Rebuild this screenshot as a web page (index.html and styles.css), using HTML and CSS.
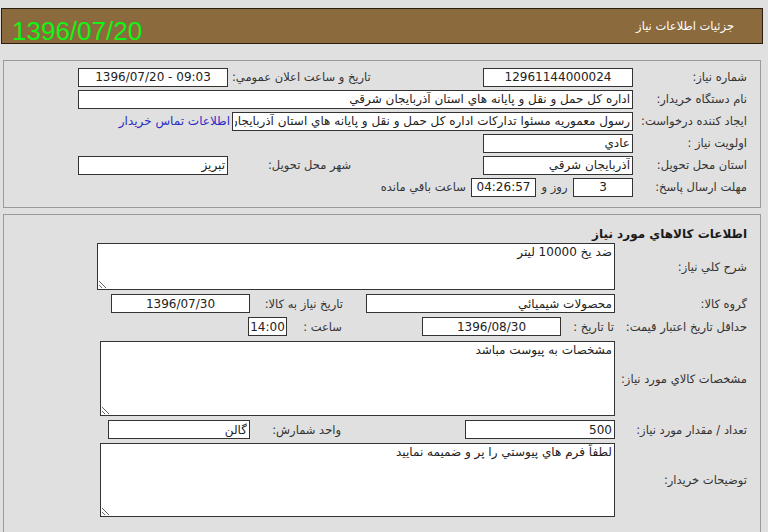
FILE: index.html
```html
<!DOCTYPE html>
<html lang="fa" dir="rtl">
<head>
<meta charset="utf-8">
<title>جزئيات اطلاعات نياز</title>
<link rel="stylesheet" href="styles.css">
</head>
<body>
<div class="page">
  <header class="topbar">
    <span class="title">جزئيات اطلاعات نياز</span>
    <span class="date">1396/07/20</span>
  </header>

  <section class="panel p1">
    <div class="row">
      <span class="lbl">شماره نياز:</span>
      <input class="fld w150 c" value="12961144000024" readonly>
      <span class="lbl2 pl4">تاريخ و ساعت اعلان عمومي:</span>
      <input class="fld w150 c" value="1396/07/20 - 09:03" readonly>
    </div>
    <div class="row">
      <span class="lbl">نام دستگاه خريدار:</span>
      <input class="fld w555" value="اداره كل حمل و نقل و پايانه هاي استان آذربايجان شرقي" readonly>
    </div>
    <div class="row">
      <span class="lbl">ايجاد كننده درخواست:</span>
      <input class="fld w401" value="رسول معموريه مسئوا تداركات اداره كل حمل و نقل و پايانه هاي استان آذربايجان" readonly>
      <a class="link" href="#">اطلاعات تماس خريدار</a>
    </div>
    <div class="row">
      <span class="lbl">اولويت نياز :</span>
      <input class="fld w150" value="عادي" readonly>
    </div>
    <div class="row">
      <span class="lbl">استان محل تحويل:</span>
      <input class="fld w150" value="آذربايجان شرقي" readonly>
      <span class="lbl2 pl40">شهر محل تحويل:</span>
      <input class="fld w150" value="تبريز" readonly>
    </div>
    <div class="row">
      <span class="lbl">مهلت ارسال پاسخ:</span>
      <input class="fld w60 c" value="3" readonly>
      <span class="mid">روز و</span>
      <input class="fld w65 c" value="04:26:57" readonly>
      <span class="after">ساعت باقي مانده</span>
    </div>
  </section>

  <section class="panel p2">
    <h2 class="head">اطلاعات كالاهاي مورد نياز</h2>
    <div class="row2 ta-row ta1">
      <span class="lbl-g">شرح كلي نياز:</span>
      <textarea class="area w518 h47" readonly>ضد يخ 10000 ليتر</textarea>
    </div>
    <div class="row2">
      <span class="lbl-g">گروه كالا:</span>
      <input class="fld w249" value="محصولات شيميائي" readonly>
      <span class="cell w116 pr23">تاريخ نياز به كالا:</span>
      <input class="fld w139 c" value="1396/07/30" readonly>
    </div>
    <div class="row2">
      <span class="lbl-g">حداقل تاريخ اعتبار قيمت:</span>
      <span class="cell w54 pr1">تا تاريخ :</span>
      <input class="fld w139 c" value="1396/08/30" readonly>
      <span class="cell w135 pr80">ساعت :</span>
      <input class="fld w39 c tight" value="14:00" readonly>
    </div>
    <div class="row2 ta-row ta2">
      <span class="lbl-g">مشخصات كالاي مورد نياز:</span>
      <textarea class="area w515 h75" readonly>مشخصات به پيوست مباشد</textarea>
    </div>
    <div class="row2">
      <span class="lbl-g">تعداد / مقدار مورد نياز:</span>
      <input class="fld w150" value="500" readonly>
      <span class="cell w215 pr124">واحد شمارش:</span>
      <input class="fld w142" value="گالن" readonly>
    </div>
    <div class="row2 ta-row ta3">
      <span class="lbl-g">توضيحات خريدار:</span>
      <textarea class="area w515 h74" readonly>لطفاً فرم هاي پيوستي را پر و ضميمه نماييد</textarea>
    </div>
  </section>
</div>
</body>
</html>
```

FILE: styles.css
```css
* { box-sizing: border-box; }
html { overflow: hidden; }
body {
  margin: 0;
  background: #e0e0e0;
  font-family: "DejaVu Sans", sans-serif;
  font-size: 11.5px;
  color: #333;
}
.page {
  width: 763px;
  margin: 0 auto 0 0;
  padding: 8px 0 0 1px;
}
.topbar {
  display: flex;
  justify-content: space-between;
  align-items: center;
  height: 36px;
  background: #8b6a3e;
  border: 1px solid #2a1e10;
  padding: 0 28px 0 10px;
}
.title {
  color: #fff;
  font-size: 11.5px;
}
.date {
  font-family: "Liberation Sans", Arial, sans-serif;
  font-size: 26px;
  line-height: 26px;
  color: #12f412;
  margin-top: 9px;
  direction: ltr;
}
.panel {
  margin: 0 2px;
  border: 1px solid #9a9a9a;
  background: #e0e0e0;
  padding-right: 13px;
}
.p1 {
  margin-top: 16px;
  padding-top: 5px;
  padding-bottom: 9px;
}
.p2 {
  margin-top: 6px;
  padding-bottom: 40px;
}
.row {
  display: flex;
  align-items: center;
  height: 22px;
}
.lbl {
  width: 114px;
  flex: none;
  white-space: nowrap;
}
.lbl2 {
  width: 255px;
  flex: none;
  text-align: left;
  white-space: nowrap;
}
.pl4 { padding-left: 4px; }
.pl40 { padding-left: 40px; }
.fld {
  flex: none;
  height: 19px;
  border: 1px solid #333;
  padding: 0 2px;
  margin: 0;
  font: inherit;
  font-size: 12px;
  color: #222;
  background: #fff;
  outline: none;
}
.c { text-align: center; direction: ltr; }
.tight { padding: 0; }
.w39 { width: 39px; }
.w60 { width: 60px; }
.w65 { width: 65px; }
.w139 { width: 139px; }
.w142 { width: 142px; }
.w150 { width: 150px; }
.w249 { width: 249px; }
.w401 { width: 401px; }
.w555 { width: 555px; }
.link {
  margin-right: 2px;
  color: #2c2cc4;
  text-decoration: none;
  white-space: nowrap;
  font-size: 12px;
}
.mid {
  width: 37px;
  flex: none;
  text-align: center;
}
.after {
  margin-right: 5px;
  white-space: nowrap;
}
.head {
  margin: 0;
  padding-top: 11px;
  font-size: 12px;
  line-height: 16px;
  font-weight: bold;
  color: #1a1a1a;
}
.row2 {
  display: flex;
  align-items: center;
  height: 23px;
}
.ta-row { height: auto; }
.ta1 { margin-top: 1px; margin-bottom: 2px; }
.ta2 { margin-top: 3px; margin-bottom: 2px; }
.ta3 { margin-top: 2px; }
.lbl-g {
  width: 132px;
  flex: none;
  white-space: nowrap;
}
.cell {
  flex: none;
  white-space: nowrap;
}
.w54 { width: 54px; }
.w116 { width: 116px; }
.w135 { width: 135px; }
.w215 { width: 215px; }
.pr1 { padding-right: 1px; }
.pr23 { padding-right: 23px; }
.pr80 { padding-right: 80px; }
.pr124 { padding-right: 124px; }
.area {
  flex: none;
  display: block;
  margin: 0;
  border: 1px solid #333;
  padding: 1px 2px;
  font: inherit;
  font-size: 12px;
  line-height: 15px;
  color: #222;
  background: #fff;
  outline: none;
  resize: both;
}
.w515 { width: 515px; }
.w518 { width: 518px; }
.h47 { height: 47px; }
.h74 { height: 74px; }
.h75 { height: 75px; }
```
